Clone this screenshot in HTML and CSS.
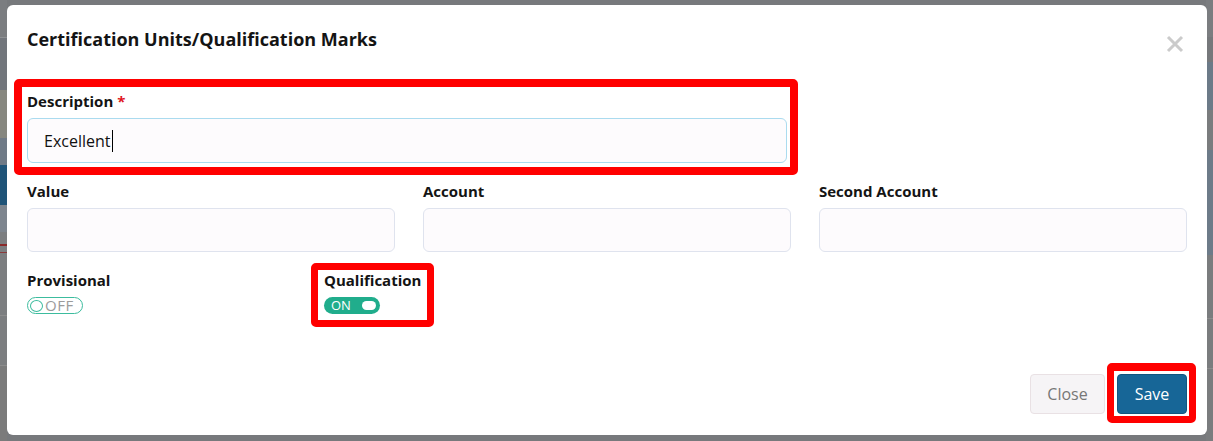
FILE: index.html
```html
<!DOCTYPE html>
<html lang="en">
<head>
<meta charset="utf-8">
<title>Certification Units/Qualification Marks</title>
<link rel="stylesheet" href="styles.css">
</head>
<body>
<div class="modal">
  <div class="modal-header">
    <h4 class="modal-title">Certification Units/Qualification Marks</h4>
    <button class="close-x" aria-label="Close">
      <svg width="18" height="18" viewBox="0 0 18 18"><path d="M2 2 L16 16 M16 2 L2 16" stroke="#cbcbcb" stroke-width="3" fill="none"/></svg>
    </button>
  </div>
  <div class="modal-body">
    <div class="field field-desc hl hl-desc">
      <label class="lbl">Description <span class="req">*</span></label>
      <div class="input focused">Excellent<span class="caret"></span></div>
    </div>
    <div class="row-3">
      <div class="field"><label class="lbl">Value</label><div class="input"></div></div>
      <div class="field"><label class="lbl">Account</label><div class="input"></div></div>
      <div class="field"><label class="lbl">Second Account</label><div class="input"></div></div>
    </div>
    <div class="row-4">
      <div class="field">
        <label class="lbl">Provisional</label>
        <span class="toggle off"><span class="knob"></span><span class="tt">OFF</span></span>
      </div>
      <div class="field">
        <div class="qual hl hl-qual">
          <label class="lbl">Qualification</label>
          <span class="toggle on"><span class="tt">ON</span><span class="knob"></span></span>
        </div>
      </div>
    </div>
  </div>
  <div class="modal-footer">
    <button class="btn btn-default">Close</button>
    <span class="hl hl-save"><button class="btn btn-primary">Save</button></span>
  </div>
</div>
</body>
</html>
```
FILE: styles.css
```css
html, body {
  height: 100%;
}
body {
  margin: 0;
  padding: 5px 6px 6px 7px;
  box-sizing: border-box;
  font-family: "Open Sans", "Liberation Sans", sans-serif;
  color: #141414;
  background-color: #77797c;
  background-image:
    linear-gradient(to bottom, #7b7d80 0 37px, #8e9093 37px 38px, #72767c 38px 90px, #86877f 90px 138px, #6f7a86 138px 165px, #1f5478 165px 205px, #7d858e 205px 232px, #7c7e80 232px 244px, #8a2a2a 244px 246px, #7c7e80 246px 252px, #8a3a3a 252px 253px, #7c7e80 253px 315px, #8c8c8c 315px 316px, #7c7e80 316px 365px, #8c8c8c 365px 366px, #7b7b7b 366px 441px),
    linear-gradient(to bottom, #7b7d80 0 37px, #76787b 37px 62px, #6c7a88 62px 110px, #7a7c7e 110px 150px, #6d7b89 150px 255px, #7a7c7e 255px 318px, #8c8c8c 318px 319px, #7a7c7e 319px 368px, #8c8c8c 368px 369px, #7a7c7e 369px 441px);
  background-size: 7px 441px, 7px 441px;
  background-position: left top, right top;
  background-repeat: no-repeat;
}

.modal {
  background: #fff;
  border-radius: 6px;
  display: flex;
  flex-direction: column;
}

.modal-header {
  display: flex;
  justify-content: space-between;
  align-items: flex-start;
  padding: 20px 20px 0 20px;
}
.modal-title {
  margin: 0;
  font-size: 18px;
  line-height: 28px;
  font-weight: 700;
  color: #141414;
}
.close-x {
  border: 0;
  background: transparent;
  padding: 0;
  margin: 10px 3px 0 0;
  width: 18px;
  height: 18px;
  display: block;
}
.close-x svg { display: block; }

.modal-body {
  padding: 37px 20px 0 20px;
}

.field {
  display: flex;
  flex-direction: column;
  align-items: flex-start;
}
.lbl {
  font-size: 15px;
  line-height: 22px;
  font-weight: 700;
  color: #141414;
  margin-bottom: 6px;
}
.req { color: #e0161d; }

.input {
  box-sizing: border-box;
  width: 100%;
  height: 44px;
  border: 1px solid #dfe3ee;
  border-radius: 6px;
  background: #fdfbfd;
  padding: 0 16px;
  font-size: 16px;
  color: #111;
  display: flex;
  align-items: center;
}
.input.focused {
  height: 45px;
  border-color: #aadbef;
}
.caret {
  display: inline-block;
  width: 1px;
  height: 22px;
  background: #000;
  margin-left: 1px;
}

.field-desc { width: 760px; }

.row-3 {
  display: grid;
  grid-template-columns: repeat(3, 1fr);
  column-gap: 28px;
  margin-top: 17px;
}
.row-4 {
  display: grid;
  grid-template-columns: repeat(4, 1fr);
  column-gap: 28px;
  margin-top: 17px;
}

.qual {
  display: inline-flex;
  flex-direction: column;
  align-items: flex-start;
}

.toggle {
  box-sizing: border-box;
  width: 56px;
  height: 17px;
  border-radius: 9px;
  display: inline-flex;
  align-items: center;
  font-size: 13px;
  line-height: 1;
}
.toggle.off {
  border: 1px solid #3cbc9e;
  background: #fff;
  padding-left: 2px;
}
.toggle.off .knob {
  box-sizing: border-box;
  flex: none;
  width: 13px;
  height: 12px;
  border: 1.5px solid #3cbc9e;
  border-radius: 50%;
  background: #fff;
}
.toggle.off .tt {
  color: #9b9b9b;
  margin-left: 2px;
  font-size: 15px;
  letter-spacing: 0.6px;
}
.toggle.on {
  background: #20ad8c;
  padding: 0 4px 0 7px;
  justify-content: space-between;
}
.toggle.on .tt {
  color: #fff;
  font-size: 13px;
}
.toggle.on .knob {
  width: 14px;
  height: 9px;
  border-radius: 5px;
  background: #fff;
}

.modal-footer {
  display: flex;
  justify-content: flex-end;
  align-items: center;
  gap: 12px;
  padding: 60px 20px 21px 20px;
}
.btn {
  font-family: "Open Sans", "Liberation Sans", sans-serif;
  font-size: 16px;
  height: 40px;
  padding: 0 16px;
  border-radius: 4px;
  display: block;
}
.btn-default {
  background: #f6f4f6;
  border: 1px solid #e9e1e4;
  color: #777;
  width: 75px;
}
.btn-primary {
  background: #176697;
  border: 1px solid #12557f;
  color: #fff;
  width: 70px;
}

/* red annotation boxes */
.hl { position: relative; }
.hl::after {
  content: "";
  position: absolute;
  border: 8px solid #ff0000;
  border-radius: 5px;
  pointer-events: none;
}
.hl-desc::after { left: -13px; right: -11px; top: -11px; bottom: -12px; }
.hl-qual::after { left: -13px; right: -13px; top: -6px; bottom: -13px; border-width: 7px; }
.hl-save { display: block; }
.hl-save::after { left: -10px; right: -9px; top: -11px; bottom: -9px; border-width: 8px 7px 7px 7px; }
```
